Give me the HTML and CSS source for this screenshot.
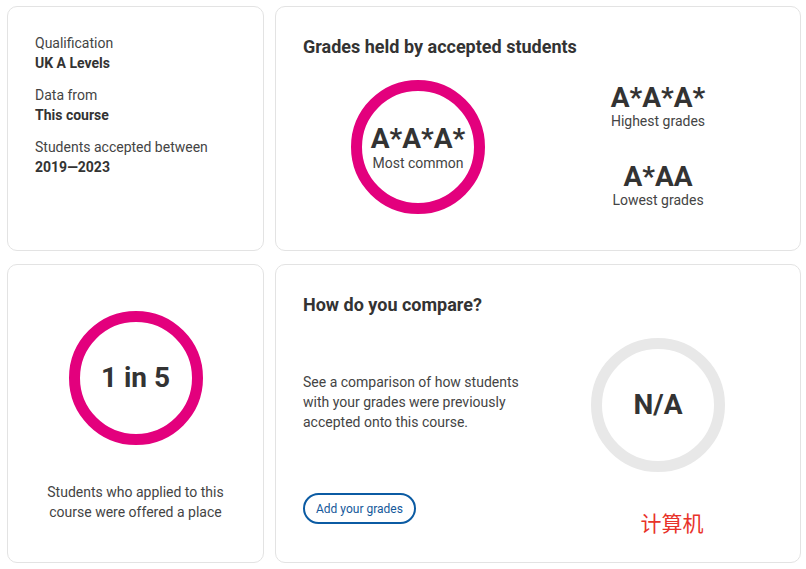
FILE: index.html
```
<!DOCTYPE html>
<html lang="en">
<head>
<meta charset="utf-8">
<title>Entry grades</title>
<link rel="stylesheet" href="styles.css">
</head>
<body>
<main class="page">
  <section class="card card-info">
    <dl class="facts">
      <div class="fact"><dt>Qualification</dt><dd>UK A Levels</dd></div>
      <div class="fact"><dt>Data from</dt><dd>This course</dd></div>
      <div class="fact"><dt>Students accepted between</dt><dd>2019—2023</dd></div>
    </dl>
  </section>

  <section class="card card-grades">
    <h2 class="card-title">Grades held by accepted students</h2>
    <div class="grades-row">
      <div class="ring ring-pink">
        <span class="big">A*A*A*</span>
        <span class="small">Most common</span>
      </div>
      <div class="grade-stack">
        <div class="grade"><span class="big">A*A*A*</span><span class="small">Highest grades</span></div>
        <div class="grade"><span class="big">A*AA</span><span class="small">Lowest grades</span></div>
      </div>
    </div>
  </section>

  <section class="card card-offer">
    <div class="ring ring-pink"><span class="big">1 in 5</span></div>
    <p class="offer-text">Students who applied to this<br>course were offered a place</p>
  </section>

  <section class="card card-compare">
    <h2 class="card-title">How do you compare?</h2>
    <div class="compare-grid">
      <p class="compare-text">See a comparison of how students with your grades were previously accepted onto this course.</p>
      <div class="ring ring-grey"><span class="big">N/A</span></div>
      <button class="btn-outline" type="button">Add your grades</button>
      <span class="calc">计算机</span>
    </div>
  </section>
</main>
</body>
</html>
```

FILE: styles.css
```
* { box-sizing: border-box; }

html, body {
  margin: 0;
  padding: 0;
  background: #ffffff;
}

body {
  font-family: Roboto, "Liberation Sans", Arial, sans-serif;
  color: #333333;
  font-size: 14px;
  line-height: 20px;
}

.page {
  display: grid;
  grid-template-columns: 257px 526px;
  grid-template-rows: 245px 299px;
  column-gap: 11px;
  row-gap: 13px;
  padding: 6px 5px 6px 7px;
}

.card {
  border: 1px solid #e3e3e3;
  border-radius: 10px;
  background: #fff;
}

/* card 1 */
.card-info {
  padding: 26px 27px;
}

.facts {
  margin: 0;
  display: flex;
  flex-direction: column;
  gap: 12px;
}

.fact dt {
  color: #444444;
  font-weight: 400;
}

.fact dd {
  margin: 0;
  font-weight: 700;
  color: #333333;
}

/* shared */
.card-title {
  margin: 0;
  font-size: 18px;
  line-height: 20px;
  font-weight: 700;
  color: #333333;
}

.ring {
  width: 134px;
  height: 134px;
  border-radius: 50%;
  border: 11px solid #e3007d;
  display: flex;
  flex-direction: column;
  align-items: center;
  justify-content: center;
}

.ring-grey {
  border-color: #e8e8e8;
}

.big {
  font-size: 28px;
  line-height: 30px;
  font-weight: 700;
  color: #333333;
  white-space: nowrap;
}

.small {
  font-size: 14px;
  line-height: 20px;
  color: #444444;
  white-space: nowrap;
}

.ring .big + .small {
  margin-top: -1px;
}

.ring-pink .big:first-child:not(:only-child) {
  margin-top: 3px;
}

/* card 2 */
.card-grades {
  padding: 30px 27px;
}

.grades-row {
  margin-top: 23px;
  display: grid;
  grid-template-columns: 230px 250px;
  align-items: start;
}

.grades-row .ring {
  justify-self: center;
}

.grade-stack {
  margin-top: 3px;
  display: flex;
  flex-direction: column;
  align-items: center;
  gap: 31px;
}

.grade {
  display: flex;
  flex-direction: column;
  align-items: center;
}

.grade .small {
  margin-top: -2px;
}

/* card 3 */
.card-offer {
  padding-top: 46px;
  display: flex;
  flex-direction: column;
  align-items: center;
}

.offer-text {
  margin: 37px 0 0;
  text-align: center;
  color: #444444;
}

/* card 4 */
.card-compare {
  padding: 30px 27px;
}

.compare-grid {
  margin-top: 23px;
  display: grid;
  grid-template-columns: 230px 250px;
  row-gap: 21px;
}

.compare-text {
  margin: 0;
  align-self: center;
  max-width: 226px;
  color: #444444;
  padding-bottom: 6px;
}

.compare-grid .ring {
  justify-self: center;
}

.btn-outline {
  justify-self: start;
  align-self: start;
  height: 31px;
  padding: 0 11px;
  border: 2px solid #0b5ba3;
  border-radius: 16px;
  background: #fff;
  color: #14589a;
  font-family: Roboto, "Liberation Sans", Arial, sans-serif;
  font-size: 12px;
  line-height: 16px;
}

.calc {
  justify-self: center;
  align-self: start;
  margin-left: 28px;
  margin-top: 16px;
  font-family: "Noto Sans CJK SC", sans-serif;
  font-size: 21px;
  line-height: 26px;
  color: #e8332a;
}
```
